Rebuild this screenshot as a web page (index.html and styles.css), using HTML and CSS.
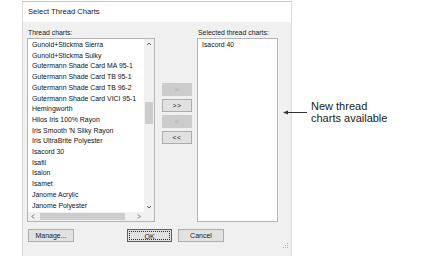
FILE: index.html
```html
<!DOCTYPE html>
<html>
<head>
<meta charset="utf-8">
<link rel="stylesheet" href="styles.css">
</head>
<body>
<div class="page">
  <div class="dialog">
    <div class="titlebar">Select Thread Charts</div>
    <div class="body">
      <div class="panes">
        <div class="pane pane-left">
          <div class="label">Thread charts:</div>
          <div class="listbox listbox-scroll">
            <ul class="items">
              <li>Gunold+Stickma Sierra</li>
              <li>Gunold+Stickma Sulky</li>
              <li>Gutermann Shade Card MA 95-1</li>
              <li>Gutermann Shade Card TB 95-1</li>
              <li>Gutermann Shade Card TB 96-2</li>
              <li>Gutermann Shade Card VICI 95-1</li>
              <li>Hemingworth</li>
              <li>Hilos Iris 100% Rayon</li>
              <li>Iris Smooth 'N Silky Rayon</li>
              <li>Iris UltraBrite Polyester</li>
              <li>Isacord 30</li>
              <li>Isafil</li>
              <li>Isalon</li>
              <li>Isamet</li>
              <li>Janome Acrylic</li>
              <li>Janome Polyester</li>
            </ul>
            <div class="vscroll">
              <svg class="sarrow" width="10" height="10" viewBox="0 0 10 10"><path d="M3 6 L5 4 L7 6" fill="none" stroke="#606060" stroke-width="1"/></svg>
              <div class="vtrack"><div class="vthumb"></div></div>
              <svg class="sarrow" width="10" height="10" viewBox="0 0 10 10"><path d="M3 4 L5 6 L7 4" fill="none" stroke="#606060" stroke-width="1"/></svg>
            </div>
            <div class="hscroll">
              <svg class="sarrow" width="10" height="9" viewBox="0 0 10 9"><path d="M6 2.5 L4 4.5 L6 6.5" fill="none" stroke="#606060" stroke-width="1"/></svg>
              <div class="htrack"><div class="hthumb"></div></div>
              <svg class="sarrow" width="10" height="9" viewBox="0 0 10 9"><path d="M4 2.5 L6 4.5 L4 6.5" fill="none" stroke="#606060" stroke-width="1"/></svg>
            </div>
            <div class="corner"></div>
          </div>
        </div>
        <div class="mover">
          <div class="btn-small disabled">&gt;</div>
          <div class="btn-small">&gt;&gt;</div>
          <div class="btn-small disabled">&lt;</div>
          <div class="btn-small">&lt;&lt;</div>
        </div>
        <div class="pane pane-right">
          <div class="label">Selected thread charts:</div>
          <div class="listbox">
            <ul class="items">
              <li>Isacord 40</li>
            </ul>
          </div>
        </div>
      </div>
      <div class="footer">
        <div class="btn btn-manage">Manage...</div>
        <div class="btn btn-ok"><span class="focus">OK</span></div>
        <div class="btn btn-cancel">Cancel</div>
        <svg class="grip" width="7" height="7" viewBox="0 0 7 7">
          <rect x="5" y="1" width="1" height="1" fill="#b0b0b0"/>
          <rect x="3" y="3" width="1" height="1" fill="#b0b0b0"/>
          <rect x="5" y="3" width="1" height="1" fill="#b0b0b0"/>
          <rect x="1" y="5" width="1" height="1" fill="#b0b0b0"/>
          <rect x="3" y="5" width="1" height="1" fill="#b0b0b0"/>
          <rect x="5" y="5" width="1" height="1" fill="#b0b0b0"/>
        </svg>
      </div>
    </div>
  </div>
  <div class="note">
    <svg class="note-arrow" width="24" height="7" viewBox="0 0 24 7"><path d="M4 3.5 H24" stroke="#333" stroke-width="1"/><path d="M0 3.5 L5 1.5 L5 5.5 Z" fill="#333"/></svg>
    <div class="note-text">New thread<br>charts available</div>
  </div>
</div>
</body>
</html>
```
FILE: styles.css
```css
* { box-sizing: border-box; }
html, body { margin: 0; padding: 0; background: #ffffff; }
body { font-family: "Liberation Sans", Arial, sans-serif; }

.page {
  display: flex;
  align-items: flex-start;
  padding: 1px 0 0 22px;
}

.dialog {
  width: 270px;
  border-top: 1px solid #c6c6c6;
  border-left: 1px solid #dcdcdc;
  border-right: 1px solid #dcdcdc;
  background: #f0f0f0;
  display: flex;
  flex-direction: column;
}

.titlebar {
  height: 20px;
  background: #ffffff;
  font-size: 7.6px;
  color: #1a1a1a;
  line-height: 20px;
  padding-left: 5px;
}

.body {
  padding: 6px 13px 7px 4px;
  display: flex;
  flex-direction: column;
}

.panes {
  display: flex;
  align-items: stretch;
}

.pane { display: flex; flex-direction: column; }
.pane-left { width: 128px; }
.pane-right { width: 81px; }

.label {
  font-size: 6.9px;
  line-height: 10px;
  height: 10px;
  color: #1a1a1a;
  padding-left: 1px;
}

.listbox {
  height: 184px;
  background: #ffffff;
  border: 1px solid #b4b4b4;
}

.listbox-scroll {
  display: grid;
  grid-template-columns: 1fr 10px;
  grid-template-rows: 1fr 9px;
}

.items {
  list-style: none;
  margin: 0;
  padding: 1px 0 0 4px;
  font-size: 6.9px;
  line-height: 10.7px;
  color: #111;
  white-space: nowrap;
  overflow: hidden;
}

.vscroll {
  display: flex;
  flex-direction: column;
  background: #f0f0f0;
}
.vtrack { flex: 1; padding: 53px 1px 0 1px; }
.vthumb { height: 22px; background: #cdcdcd; }

.hscroll {
  display: flex;
  background: #f0f0f0;
}
.htrack { flex: 1; padding: 1px 3px 1px 2px; }
.hthumb { width: 85px; height: 7px; background: #cdcdcd; }

.sarrow { display: block; flex: none; }
.corner { background: #f0f0f0; }

.mover {
  width: 42px;
  display: flex;
  flex-direction: column;
  gap: 3px;
  padding: 55px 0 0 7px;
}

.btn-small {
  width: 30px;
  height: 13px;
  background: #e1e1e1;
  border: 1px solid #adadad;
  font-size: 6.9px;
  line-height: 11px;
  text-align: center;
  color: #222;
  letter-spacing: 0.5px;
}
.btn-small.disabled {
  background: #cccccc;
  border-color: #cccccc;
  color: #a8a8a8;
}

.footer {
  display: flex;
  align-items: flex-start;
  margin-top: 7px;
  padding-left: 1px;
  height: 20px;
}

.btn {
  height: 13px;
  width: 46px;
  background: #e1e1e1;
  border: 1px solid #adadad;
  font-size: 7px;
  line-height: 11px;
  text-align: center;
  color: #1a1a1a;
}
.btn-ok {
  margin-left: 53px;
  width: 45px;
  border-color: #0078d7;
  padding: 1px;
}
.btn-ok .focus {
  display: block;
  height: 9px;
  line-height: 9px;
  border: 1px dotted #303030;
}
.btn-cancel { margin-left: 6px; }

.grip {
  margin-left: auto;
  margin-right: -11px;
  align-self: flex-end;
  display: block;
}

.note {
  display: flex;
  align-items: center;
  margin: 100px 0 0 -9px;
}
.note-arrow { display: block; flex: none; }
.note-text {
  margin-left: 4px;
  font-size: 11px;
  line-height: 11.5px;
  color: #1a1a1a;
}
```
